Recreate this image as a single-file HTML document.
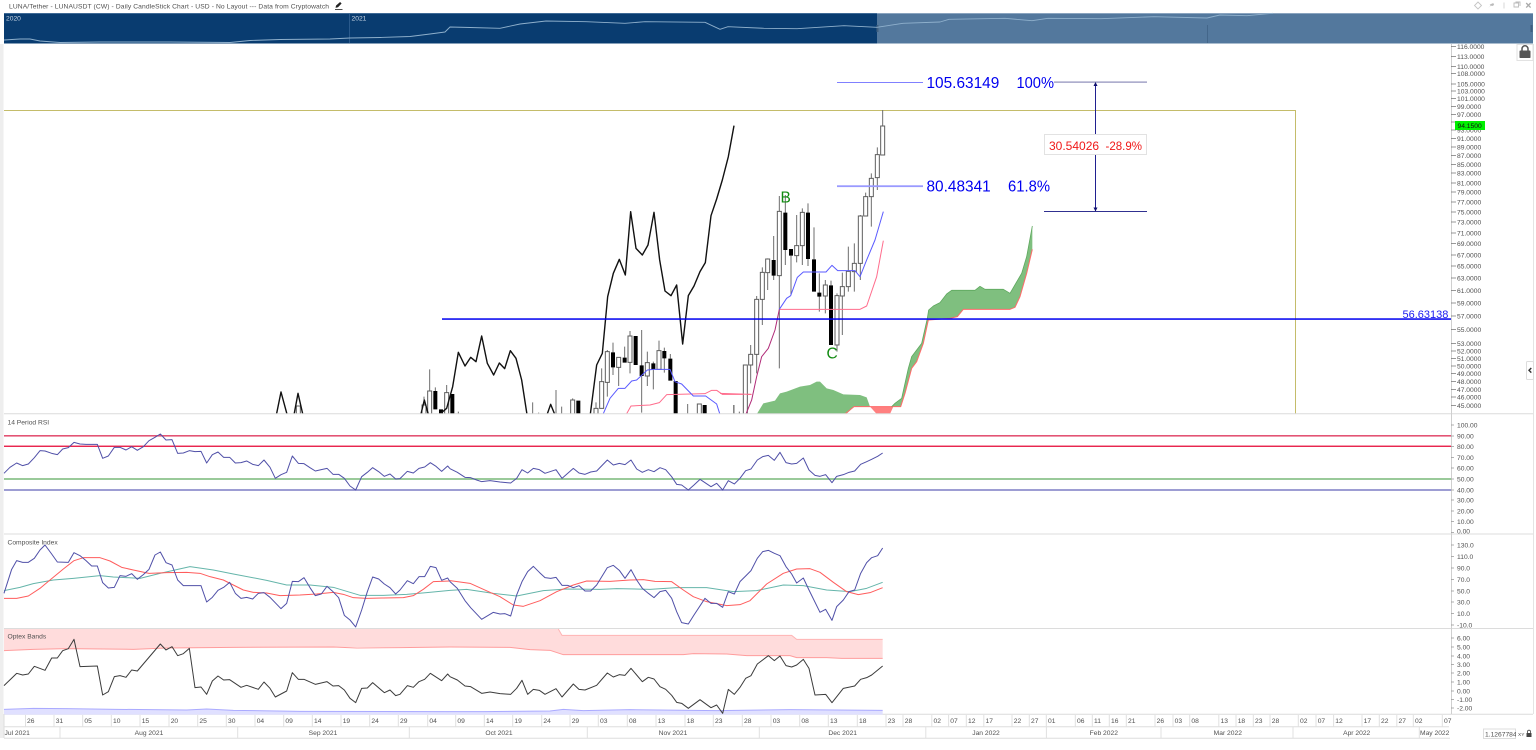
<!DOCTYPE html>
<html><head><meta charset="utf-8"><title>LUNA/Tether Chart</title>
<style>
html,body{margin:0;padding:0;background:#fff;overflow:hidden}
svg{display:block}
text{font-family:"Liberation Sans",sans-serif;font-size:6.7px;fill:#505050}
polyline,path.v{fill:none;vector-effect:non-scaling-stroke;stroke-linejoin:round}
path.h{fill:#fff;vector-effect:non-scaling-stroke;stroke-linejoin:miter}
.big{font-size:15.4px;fill:#0000f0}
</style></head><body>
<svg width="1536" height="750" viewBox="0 0 1536 750" xmlns="http://www.w3.org/2000/svg">
<defs><clipPath id="mc"><rect x="4" y="44" width="1447" height="369.5"/></clipPath></defs>
<rect width="1536" height="750" fill="#fff"/>
<rect x="0" y="44" width="3.5" height="694" fill="#eee"/>

<!-- title -->
<text x="9" y="8.6" textLength="320" lengthAdjust="spacing">LUNA/Tether - LUNAUSDT (CW) - Daily CandleStick Chart - USD - No Layout --- Data from Cryptowatch</text>
<path d="M335.5 7.5l.6-2 4-3.5 1.5 1.5-3.6 3.7-2 .6z" fill="#222"/><path d="M335 9.6h7.5" stroke="#222" stroke-width=".8"/>

<!-- window icons -->
<path d="M1478 2l3.5 3.5-3.5 3.5-3.5-3.5z" fill="none" stroke="#c4c4c4" stroke-width=".9"/>
<path d="M1488 8l2.5-2.2-.8-1.2 3.6-1.6.8 2-1.8 1 -1.3-.4z" fill="#bbb"/>
<path d="M1504 2.5v6" stroke="#ddd" stroke-width="1.2"/>
<path d="M1514 3h4.5v4h-4.5z M1515.5 2h4.5v4" fill="none" stroke="#bbb" stroke-width=".9"/>
<path d="M1526.2 3l4.4 4.6M1530.6 3l-4.4 4.6" stroke="#aaa" stroke-width="1.3"/>

<!-- navigator -->
<rect x="4" y="13" width="873" height="30.5" fill="#093c70"/>
<rect x="877" y="13" width="656" height="30.5" fill="#53789d"/>
<rect x="4" y="13" width="873" height="1" fill="#3f6a96"/>
<rect x="877" y="13" width="656" height="1" fill="#8aa4bf"/>
<rect x="349" y="14" width="1" height="29" fill="#2a5a8c"/>
<rect x="1207" y="25" width=".8" height="18" fill="#3f6285"/>
<rect x="876.5" y="25" width="2" height="7" fill="#3f5f80"/>
<rect x="1530.5" y="25" width="2" height="7" fill="#3f5f80"/>
<text x="6" y="20.3" style="fill:#c9d6e4">2020</text>
<text x="351.5" y="20.3" style="fill:#c9d6e4">2021</text>
<polyline stroke="#8fb0cc" stroke-width=".9" points="4,40 20,39 30,39 40,41 60,42.5 100,42 170,42 230,42.5 250,40.5 280,39.5 330,39 350,38 380,37.5 410,36.5 430,34 445,32 450,27 470,27.5 500,28.3 520,24 546,21 586,21.7 625,23.3 645,21.7 705,22.3 720,29.3 728,26.7 764,28.3 797,28.7 844,25.7 877,27.3 903,23.3 940,22 949,19.3 1005,18.3 1032,20.7 1048,18.3 1101,18.7 1154,16.7 1207,18 1220,15 1247,15.7 1273,13.3"/>

<!-- main pane -->
<g clip-path="url(#mc)">
<!-- gold box -->
<path d="M4 110.5H1295.5V414" fill="none" stroke="#c4bc6a" stroke-width="1"/>

<!-- cloud, zoom-2 coordinates -->
<g transform="translate(720,60) scale(.33333)">
<path d="M622 775L626 750L640 738L660 728L680 702L695 691L765 691L780 679L795 688L850 688L870 700L905 640L920 590L937 498L937 568L920 640L900 710L885 742L870 748L730 748L712 770L690 775Z" fill="#7fbf7f"/>
<path d="M622 775L605 850L575 890L565 925L545 1015L525 1030L515 1040L542 1040L555 1000L575 925L590 905L610 850L625 780Z" fill="#7fbf7f"/>
<path d="M108 1066L130 1030L165 1022L180 1000L200 995L240 980L270 975L290 965L300 965L320 985L340 990L370 1003L420 1005L440 1012L450 1040L402 1040L375 1066Z" fill="#7fbf7f"/>
<path d="M450 1040L470 1062L510 1062L520 1040Z" fill="#ff8080"/>
<polyline stroke="#ff6a6a" stroke-width="1" points="375,1062 402,1040 542,1040 555,1000 575,925 590,905 610,850 625,780 690,775 712,770 730,748 870,748 885,742 900,710 920,640 937,568"/>
<polyline stroke="#5fa85f" stroke-width=".8" points="515,1040 525,1030 545,1015 565,925 575,890 605,850 622,775 626,750 640,738 660,728 680,702 695,691 765,691 780,679 795,688 850,688 870,700 905,640 920,590 937,498"/>
</g>

<!-- candles left, zoom-9 coordinates -->
<g transform="translate(240,100) scale(.33333)">
<path class="v" stroke="#6e6e6e" stroke-width="1" d="M1343 912V945M1291 762V776M1273 743V818M1257 722V752M1240 785V868M1222 755V858M1205 690V938M1170 693V820M1154 740V773M1136 802V858M1119 728V825M1102 750V890M1085 805V845M1068 907V925M998 895V900M965 920V945M948 870V945M896 938V945M878 907V945M655 935V945M620 855V878M586 862V873M569 808V873M552 890V915M1481 915V945M1498 935V945"/>
<path class="h" stroke="#5e5e5e" stroke-width="1" d="M1372 912h12v33h-12zM1216 788h12v40h-12zM1164 708h12v79h-12zM1130 772h12v30h-12zM1096 755h12v92h-12zM1079 845h12v80h-12zM1062 925h12v20h-12zM1251 752h12v56h-12zM992 900h12v45h-12zM614 878h12v67h-12zM563 873h12v72h-12zM546 915h12v30h-12zM169 918h12v27h-12z"/>
<path fill="#000" d="M1388 915h12v30h-12zM1301 843h12v102h-12zM1285 776h12v66h-12zM1267 753h12v22h-12zM1234 790h12v18h-12zM1199 796h12v32h-12zM1181 708h12v87h-12zM1148 773h12v15h-12zM1113 757h12v45h-12zM1009 902h12v43h-12zM631 882h12v63h-12zM597 928h12v17h-12zM580 873h12v55h-12z"/>
<!-- black line -->
<polyline stroke="#111" stroke-width="1.4" points="108,950 123,876 143,950"/>
<polyline stroke="#111" stroke-width="1.4" points="161,950 174,880 190,950"/>
<polyline stroke="#111" stroke-width="1.4" points="541,950 553,900 567,950"/>
<polyline stroke="#111" stroke-width="1.4" points="600,942 620,925 638,860 655,757 675,798 692,772 708,785 725,708 742,790 761,825 778,789 794,806 811,752 828,775 845,840 862,950"/>
<polyline stroke="#111" stroke-width="1.4" points="919,950 932,913 947,950"/>
<polyline stroke="#111" stroke-width="1.4" points="1050,950 1070,795 1087,760 1103,590 1120,520 1138,478 1156,525 1172,335 1188,445 1207,465 1224,435 1242,337 1259,480 1275,573 1293,587 1310,555 1328,732 1345,587 1362,558 1380,515 1396,488 1413,347 1430,297 1447,240 1465,170 1482,77"/>
<!-- kijun, tenkan left -->
<polyline stroke="#ff6c8c" stroke-width="1" points="1155,950 1173,918 1230,915 1258,908 1280,884 1395,881 1415,871 1430,871 1447,883 1535,883"/>
<polyline stroke="#5a5aff" stroke-width="1" points="1086,950 1110,895 1135,865 1155,865 1175,843 1190,840 1222,810 1240,808 1290,808 1305,845 1325,852 1360,888 1397,888 1430,912 1442,950"/>
</g>

<!-- candles right, zoom-2 coordinates -->
<g transform="translate(720,60) scale(.33333)">
<path class="v" stroke="#6e6e6e" stroke-width="1" d="M488 150V198M472 262V390M454 340V500M437 398V410M421 465V660M403 550V695M385 560V695M367 638V825M351 700V875M333 662V676M316 660V760M298 640V755M282 502V598M264 430V618M247 445V615M230 465V607M213 587V703M196 405V615M178 408V925M161 528V660M143 595V690M127 622V795M110 708V940M92 855V970M42 1035V1065"/>
<path class="h" stroke="#5e5e5e" stroke-width="1" d="M482 198h12v87h-12zM466 284h12v69h-12zM448 355h12v55h-12zM431 410h12v58h-12zM415 468h12v142h-12zM397 610h12v25h-12zM379 634h12v46h-12zM361 680h12v28h-12zM345 707h12v148h-12zM310 675h12v33h-12zM241 457h12v100h-12zM224 557h12v30h-12zM172 454h12v193h-12zM137 597h12v41h-12zM121 637h12v81h-12zM104 718h12v165h-12zM86 883h12v32h-12zM70 915h12v150h-12z"/>
<path fill="#000" d="M327 676h12v179h-12zM292 698h12v12h-12zM276 598h12v97h-12zM258 458h12v139h-12zM207 567h12v20h-12zM190 458h12v112h-12zM155 600h12v47h-12z"/>
<polyline stroke="#ff6c8c" stroke-width="1" points="0,1000 93,1003"/>
<polyline stroke="#ff6c8c" stroke-width="1" points="178,748 420,748 440,738 470,650 490,542"/>
<polyline stroke="#b02a78" stroke-width="1" points="78,1062 95,1020 110,950 125,890 145,865 165,810 178,748"/>
<polyline stroke="#5a5aff" stroke-width="1" points="178,748 200,715 212,707 232,652 250,636 318,636 336,616 353,632 405,632 420,650 440,600 465,540 490,455"/>
</g>

<!-- horizontal -->
<rect x="442" y="318.3" width="1009" height="1.5" fill="#0000f0"/>
<text x="1402.5" y="318" style="font-size:11px;fill:#1a1af0">56.63138</text>

<!-- fib -->
<rect x="837" y="82" width="86" height="1" fill="#8080ff"/>
<rect x="837" y="185.3" width="86" height="1.8" fill="#9a9aff"/>
<text class="big" x="926.5" y="88">105.63149</text>
<text class="big" x="1016.5" y="88" textLength="37.5" lengthAdjust="spacingAndGlyphs">100%</text>
<text class="big" x="926.5" y="191.5">80.48341</text>
<text class="big" x="1008" y="191.5" textLength="42" lengthAdjust="spacingAndGlyphs">61.8%</text>
<!-- measure -->
<rect x="1054" y="81.5" width="93" height="1.2" fill="#8c8cba"/>
<rect x="1044" y="211" width="103" height="1" fill="#303090"/>
<path d="M1095.5 83V211" stroke="#202090" stroke-width="1"/>
<path d="M1095.5 82l-2 4h4zM1095.5 211.5l-2-4h4z" fill="#101070"/>
<rect x="1044.5" y="134.5" width="102" height="20" fill="#fff" stroke="#e2e2e2"/>
<text x="1049" y="150" style="font-size:12px;fill:#f01818">30.54026</text>
<text x="1105.5" y="150" style="font-size:12px;fill:#f01818" textLength="36.5" lengthAdjust="spacingAndGlyphs">-28.9%</text>
<!-- labels -->
<text x="780.5" y="202.5" style="font-size:15.5px;fill:#108a10">B</text>
<text x="826.5" y="358.5" style="font-size:15.5px;fill:#108a10">C</text>
</g>

<!-- pane separators -->
<path d="M4 413.8H1533M4 534H1533M4 628.5H1533M4 714.3H1533" stroke="#dcdcdc" stroke-width="1"/>
<path d="M1451.5 44V714" stroke="#cfcfcf" stroke-width="1"/>
<path d="M1533.5 44V714" stroke="#e4e4e4" stroke-width="1"/>

<!-- RSI -->
<text x="7.5" y="424.5">14 Period RSI</text>
<rect x="4" y="435" width="1447" height="1.6" fill="#e35474"/>
<rect x="4" y="445.6" width="1447" height="1.3" fill="#e60f3c"/>
<rect x="4" y="478.2" width="1447" height="1.6" fill="#82bd82"/>
<rect x="4" y="489.2" width="1447" height="1.6" fill="#8585c8"/>
<g transform="translate(0,410) scale(.33333)">
<polyline stroke="#5050a8" stroke-width="1" points="12,190 30,172 50,159 68,167 85,162 103,143 120,122 135,123 155,130 172,134 188,117 205,113 222,97 240,102 258,103 292,103 308,145 325,138 343,112 360,112 378,120 395,110 412,121 430,110 447,92 465,82 481,72 498,90 516,89 533,130 550,129 568,122 585,125 603,124 620,159 637,134 654,126 671,142 689,142 706,159 723,158 740,153 758,163 775,167 792,150 810,172 826,205 843,194 860,187 877,138 895,160 912,161 930,173 946,183 964,179 981,175 999,193 1016,193 1033,205 1050,228 1067,240 1085,200 1102,187 1118,173 1136,185 1153,199 1170,192 1187,207 1200,206 1222,184 1240,189 1257,175 1274,171 1291,158 1308,169 1325,184 1343,168 1350,176"/>
<g transform="translate(1350,0)"><polyline stroke="#5050a8" stroke-width="1" points="0,176 22,187 45,202 62,203 80,210 95,215 120,212 150,216 182,219 200,205 216,179 233,189 250,175 268,179 285,190 318,179 336,205 370,175 387,189 405,193 422,186 440,183 472,150 490,165 508,160 525,164 543,150 560,177 577,187 595,179 612,185 630,173 647,179 665,200 680,223 695,225 715,240 732,225 750,208 783,230 800,220 818,240 835,212 853,222 870,205 887,182 903,177 922,150 938,140 955,136 973,151 990,127 1008,158 1025,162 1040,160 1060,144 1077,180 1095,196 1110,199 1127,194 1146,218 1160,199 1180,194 1197,187 1214,183 1232,163 1250,155 1265,148 1283,139 1298,129"/></g>

<!-- Composite -->
<polyline stroke="#65b5aa" stroke-width="1" points="12,542 60,532 100,521 160,510 220,505 300,497 340,501 420,505 480,490 570,470 640,480 700,492 800,511 860,525 930,525 1000,532 1080,556 1150,556 1220,553 1280,548 1350,541"/>
<polyline stroke="#ff5c5c" stroke-width="1" points="12,565 50,565 85,558 120,535 150,510 190,477 222,452 250,443 300,443 330,453 365,472 400,480 447,490 500,488 560,487 600,490 630,500 670,510 700,525 730,540 760,547 800,549 840,557 900,555 950,552 1000,547 1030,553 1060,563 1100,565 1150,564 1210,563 1240,557 1270,538 1300,515 1350,513"/>
<polyline stroke="#5050a8" stroke-width="1" points="12,550 35,478 50,452 68,457 85,457 103,445 120,420 135,405 155,432 172,456 205,457 222,428 240,437 258,452 275,468 292,468 308,518 325,534 343,532 360,497 378,499 395,491 412,508 430,494 447,478 465,435 481,426 498,458 516,465 533,510 550,527 603,527 620,576 637,562 654,541 671,532 689,517 706,550 723,565 740,562 758,567 775,550 792,548 810,562 843,596 860,580 877,514 895,515 912,503 930,533 946,557 964,552 981,529 999,545 1016,563 1033,616 1050,630 1067,651 1085,600 1102,545 1118,501 1136,507 1153,522 1170,533 1187,552 1200,540 1222,512 1240,521 1257,500 1274,500 1291,469 1308,473 1325,511 1343,504 1350,515"/>
<g transform="translate(1350,0)">
<polyline stroke="#65b5aa" stroke-width="1" points="0,541 50,538 130,550 200,558 280,542 350,537 450,538 500,536 600,538 680,533 770,533 850,545 920,542 1000,525 1060,527 1130,540 1200,545 1250,535 1298,517"/>
<polyline stroke="#ff5c5c" stroke-width="1" points="0,512 60,520 120,547 150,560 190,585 220,589 270,572 320,545 370,525 410,513 480,514 540,510 580,509 615,514 665,515 700,540 730,560 770,575 830,587 870,584 900,572 950,522 1000,490 1040,477 1080,476 1110,487 1150,517 1190,545 1225,554 1260,548 1298,533"/>
<polyline stroke="#5050a8" stroke-width="1" points="0,515 22,535 45,572 62,593 95,628 130,607 150,612 165,611 182,618 200,555 216,515 233,485 250,469 268,487 285,503 302,505 318,502 336,526 353,526 370,533 387,527 405,543 422,543 440,525 472,473 490,466 508,481 525,505 543,479 560,510 577,535 595,550 612,563 630,545 647,541 665,565 680,605 695,638 715,642 732,615 765,565 783,580 800,580 818,592 835,545 853,552 870,515 887,498 903,482 922,445 938,425 955,421 973,430 990,437 1008,470 1025,492 1040,519 1060,504 1077,540 1110,607 1127,598 1146,631 1160,590 1180,570 1197,545 1214,540 1232,490 1250,458 1265,443 1283,437 1298,414"/>
</g>

<!-- Optex bands -->
<path fill="#ffdcdc" d="M12 657H1350H1675L1686 676H2375L2390 688H2648V745L2525 745L2480 743L2390 743L2370 737L2240 737L2180 732L2080 731L2050 734L1690 734L1650 721L1590 719L1530 712L1350 711L1000 711L700 712L500 714L400 718L200 716L100 718L12 722Z"/>
<polyline stroke="#ff9c9c" stroke-width="1" points="12,722 100,718 200,716 400,718 500,714 700,712 1000,711 1070,714 1200,713 1350,711 1530,712 1590,719 1650,721 1690,734 2050,734 2080,731 2180,732 2240,737 2370,737 2390,743 2480,743 2525,745 2648,745"/>
<polyline stroke="#ffb4b4" stroke-width="1" points="1675,657 1686,676 2375,676 2390,688 2648,688"/>
<path fill="#e0e0ff" d="M12 898L100 895L200 896L350 898L560 900L620 897L700 901L900 904L1350 905L1450 905L1650 903L1690 898L1750 902L1890 899L2150 902L2370 899L2648 901V914H12Z"/>
<polyline stroke="#aaaaff" stroke-width="1" points="12,898 100,895 200,896 350,898 560,900 620,897 700,901 900,904 1350,905 1450,905 1650,903 1690,898 1750,902 1890,899 2150,902 2370,899 2648,901"/>
<polyline stroke="#3c3c3c" stroke-width="1" points="12,827 50,790 68,795 85,792 103,769 135,781 155,744 172,744 188,722 205,716 222,688 240,770 292,768 308,855 325,845 343,800 360,797 378,802 395,780 412,783 481,702 498,720 516,710 533,737 550,731 568,715 585,833 603,831 620,853 637,813 654,798 671,810 689,809 723,832 740,826 775,838 792,816 810,835 826,861 860,843 877,788 895,808 912,808 946,823 981,815 999,828 1016,827 1033,840 1050,865 1067,878 1085,835 1102,834 1118,818 1153,848 1170,840 1187,857 1200,853 1222,827 1240,832 1257,815 1274,808 1291,790 1325,812 1343,792 1350,800"/>
<g transform="translate(1350,0)"><polyline stroke="#3c3c3c" stroke-width="1" points="0,800 22,810 45,828 62,830 95,850 120,846 150,851 182,853 200,835 216,811 233,853 250,838 268,841 285,853 318,836 336,861 370,822 387,838 405,840 440,826 472,789 490,801 508,794 525,796 543,775 577,815 595,802 612,807 630,830 647,838 665,856 680,877 695,880 715,895 750,869 783,893 800,885 818,910 835,838 853,853 870,832 887,805 903,797 922,762 955,737 973,752 990,738 1008,767 1025,771 1040,765 1060,748 1077,775 1095,855 1127,853 1146,878 1180,835 1214,828 1232,808 1250,803 1265,795 1298,768"/></g>
</g>
<text x="7.5" y="544.5">Composite Index</text>
<text x="7.5" y="638.5">Optex Bands</text>

<!-- price axis -->
<path stroke="#777" stroke-width=".8" d="M1451 46.5h5M1451 56.5h5M1451 66.5h5M1451 73.5h5M1451 84h5M1451 91h5M1451 98.5h5M1451 106.5h5M1451 114.5h5M1451 122h5M1451 130h5M1451 138.5h5M1451 147h5M1451 155.5h5M1451 164.5h5M1451 173h5M1451 183h5M1451 192h5M1451 202h5M1451 212h5M1451 222h5M1451 233h5M1451 243.5h5M1451 255h5M1451 266h5M1451 278h5M1451 290.5h5M1451 303h5M1451 316h5M1451 329.5h5M1451 343.5h5M1451 351h5M1451 358.5h5M1451 366h5M1451 373.5h5M1451 381.5h5M1451 389.5h5M1451 397h5M1451 405.5h5"/>
<path stroke="#999" stroke-width=".8" d="M1451 425h3M1451 436h3M1451 446.5h3M1451 457.5h3M1451 468h3M1451 479h3M1451 490h3M1451 500h3M1451 511h3M1451 521.5h3M1451 532.5h3M1451 545h3M1451 556.5h3M1451 568h3M1451 579.5h3M1451 591h3M1451 602h3M1451 613.5h3M1451 625h3M1451 638h3M1451 647h3M1451 656h3M1451 664.5h3M1451 673h3M1451 682h3M1451 691h3M1451 699.5h3M1451 708h3"/>
<text x="1457" y="48.9">116.0000</text><text x="1457" y="58.9">113.0000</text><text x="1457" y="68.9">110.0000</text><text x="1457" y="75.9">108.0000</text><text x="1457" y="86.4">105.0000</text><text x="1457" y="93.4">103.0000</text><text x="1457" y="100.9">101.0000</text><text x="1457" y="108.9">99.0000</text><text x="1457" y="116.9">97.0000</text><text x="1457" y="132.4">93.0000</text><text x="1457" y="140.9">91.0000</text><text x="1457" y="149.4">89.0000</text><text x="1457" y="157.9">87.0000</text><text x="1457" y="166.9">85.0000</text><text x="1457" y="175.4">83.0000</text><text x="1457" y="185.4">81.0000</text><text x="1457" y="194.4">79.0000</text><text x="1457" y="204.4">77.0000</text><text x="1457" y="214.4">75.0000</text><text x="1457" y="224.4">73.0000</text><text x="1457" y="235.4">71.0000</text><text x="1457" y="245.9">69.0000</text><text x="1457" y="257.4">67.0000</text><text x="1457" y="268.4">65.0000</text><text x="1457" y="280.4">63.0000</text><text x="1457" y="292.9">61.0000</text><text x="1457" y="305.4">59.0000</text><text x="1457" y="318.4">57.0000</text><text x="1457" y="331.9">55.0000</text><text x="1457" y="345.9">53.0000</text><text x="1457" y="353.4">52.0000</text><text x="1457" y="360.9">51.0000</text><text x="1457" y="368.4">50.0000</text><text x="1457" y="375.9">49.0000</text><text x="1457" y="383.9">48.0000</text><text x="1457" y="391.9">47.0000</text><text x="1457" y="399.4">46.0000</text><text x="1457" y="407.9">45.0000</text>
<rect x="1455" y="121" width="30" height="9" fill="#00f000"/>
<text x="1457.5" y="128" style="fill:#111">94.1500</text>

<text x="1457" y="427.4">100.00</text><text x="1457" y="438.4">90.00</text><text x="1457" y="448.9">80.00</text><text x="1457" y="459.9">70.00</text><text x="1457" y="470.4">60.00</text><text x="1457" y="481.4">50.00</text><text x="1457" y="492.4">40.00</text><text x="1457" y="502.4">30.00</text><text x="1457" y="513.4">20.00</text><text x="1457" y="523.9">10.00</text><text x="1457" y="533.4">0.00</text>
<text x="1457" y="547.4">130.0</text><text x="1457" y="558.9">110.0</text><text x="1457" y="570.4">90.0</text><text x="1457" y="581.9">70.0</text><text x="1457" y="593.4">50.0</text><text x="1457" y="604.4">30.0</text><text x="1457" y="615.9">10.0</text><text x="1457" y="627.4">-10.0</text>
<text x="1457" y="640.4">6.00</text><text x="1457" y="649.4">5.00</text><text x="1457" y="658.4">4.00</text><text x="1457" y="666.9">3.00</text><text x="1457" y="675.4">2.00</text><text x="1457" y="684.4">1.00</text><text x="1457" y="693.4">0.00</text><text x="1457" y="701.9">-1.00</text><text x="1457" y="710.4">-2.00</text>

<!-- lock, collapse -->
<rect x="1517" y="44.5" width="16" height="16" fill="#fff" stroke="#e2e2e2"/>
<rect x="1519.5" y="50.5" width="11" height="7.5" rx=".8" fill="#555"/>
<path d="M1522 51v-2.2a3 3 0 0 1 6 0V51" fill="none" stroke="#555" stroke-width="1.5"/>
<rect x="1526.5" y="361.5" width="7" height="18" rx="1" fill="#fff" stroke="#ddd"/>
<path d="M1531.3 368l-2.3 2.3 2.3 2.3" fill="none" stroke="#333" stroke-width="1.4"/>

<!-- date rows -->
<path stroke="#dedede" stroke-width="1" d="M4 726.8H1449M4 738.2H1450M4 714V738"/>
<path stroke="#e0e0e0" stroke-width="1" d="M25.5 715v12M54 715v12M82.7 715v12M111.3 715v12M140 715v12M169 715v12M197.7 715v12M226.3 715v12M255 715v12M283.7 715v12M312.3 715v12M341 715v12M369.7 715v12M398.3 715v12M427.7 715v12M455.7 715v12M484.3 715v12M512.7 715v12M541.7 715v12M570 715v12M598.3 715v12M627.3 715v12M656 715v12M685 715v12M713.3 715v12M742.3 715v12M771 715v12M799.7 715v12M828.3 715v12M857.3 715v12M886 715v12M903 715v12M931.8 715v12M948.6 715v12M966.3 715v12M983.8 715v12M1012 715v12M1029.3 715v12M1046.3 715v12M1075.3 715v12M1092.3 715v12M1109.3 715v12M1126.3 715v12M1155 715v12M1173 715v12M1189.7 715v12M1218.8 715v12M1236 715v12M1253.3 715v12M1270 715v12M1298.3 715v12M1316 715v12M1333.6 715v12M1362 715v12M1379.3 715v12M1396.8 715v12M1413.3 715v12M1442.3 715v12"/>
<path stroke="#e0e0e0" stroke-width="1" d="M60 727v11M237.7 727v11M409.3 727v11M587.3 727v11M759.3 727v11M925.8 727v11M1046.4 727v11M1161 727v11M1293 727v11M1419.3 727v11"/>
<text x="27" y="723.2">26</text><text x="55.7" y="723.2">31</text><text x="84.4" y="723.2">05</text><text x="113" y="723.2">10</text><text x="141.7" y="723.2">15</text><text x="170.7" y="723.2">20</text><text x="199.4" y="723.2">25</text><text x="228" y="723.2">30</text><text x="256.7" y="723.2">04</text><text x="285.4" y="723.2">09</text><text x="314" y="723.2">14</text><text x="342.7" y="723.2">19</text><text x="371.4" y="723.2">24</text><text x="400" y="723.2">29</text><text x="429.4" y="723.2">04</text><text x="457.4" y="723.2">09</text><text x="486" y="723.2">14</text><text x="514.4" y="723.2">19</text><text x="543.4" y="723.2">24</text><text x="571.7" y="723.2">29</text><text x="600" y="723.2">03</text><text x="629" y="723.2">08</text><text x="657.7" y="723.2">13</text><text x="686.7" y="723.2">18</text><text x="715" y="723.2">23</text><text x="744" y="723.2">28</text><text x="772.7" y="723.2">03</text><text x="801.4" y="723.2">08</text><text x="830" y="723.2">13</text><text x="859" y="723.2">18</text><text x="887.7" y="723.2">23</text><text x="904.8" y="723.2">28</text><text x="933.5" y="723.2">02</text><text x="950.3" y="723.2">07</text><text x="968" y="723.2">12</text><text x="985.5" y="723.2">17</text><text x="1013.8" y="723.2">22</text><text x="1031" y="723.2">27</text><text x="1048" y="723.2">01</text><text x="1077" y="723.2">06</text><text x="1094" y="723.2">11</text><text x="1111" y="723.2">16</text><text x="1128" y="723.2">21</text><text x="1156.6" y="723.2">26</text><text x="1174.6" y="723.2">03</text><text x="1191.4" y="723.2">08</text><text x="1220.5" y="723.2">13</text><text x="1237.7" y="723.2">18</text><text x="1255" y="723.2">23</text><text x="1271.8" y="723.2">28</text><text x="1300" y="723.2">02</text><text x="1317.7" y="723.2">07</text><text x="1335.3" y="723.2">12</text><text x="1363.6" y="723.2">17</text><text x="1381" y="723.2">22</text><text x="1398.5" y="723.2">27</text><text x="1415" y="723.2">02</text><text x="1444" y="723.2">07</text>
<text x="4.5" y="735">Jul 2021</text>
<text x="149" y="735" text-anchor="middle">Aug 2021</text><text x="323" y="735" text-anchor="middle">Sep 2021</text><text x="499" y="735" text-anchor="middle">Oct 2021</text><text x="673" y="735" text-anchor="middle">Nov 2021</text><text x="842.7" y="735" text-anchor="middle">Dec 2021</text><text x="986" y="735" text-anchor="middle">Jan 2022</text><text x="1103.8" y="735" text-anchor="middle">Feb 2022</text><text x="1227.8" y="735" text-anchor="middle">Mar 2022</text><text x="1356.7" y="735" text-anchor="middle">Apr 2022</text><text x="1420" y="735">May 2022</text>

<!-- cursor value -->
<rect x="1483.5" y="729" width="32" height="9.5" fill="#fff" stroke="#dcdcdc"/>
<text x="1485" y="736.4">1.12677841</text>
<rect x="1516" y="729.5" width="18" height="8.5" fill="#fff"/>
<text x="1518" y="735.8" style="font-size:4.8px">XY</text>
<rect x="1526.5" y="733" width="5" height="4" fill="#444"/>
<path d="M1527.5 733v-1.3a1.5 1.5 0 0 1 3 0V733" fill="none" stroke="#444" stroke-width=".8"/>
</svg>
</body></html>
